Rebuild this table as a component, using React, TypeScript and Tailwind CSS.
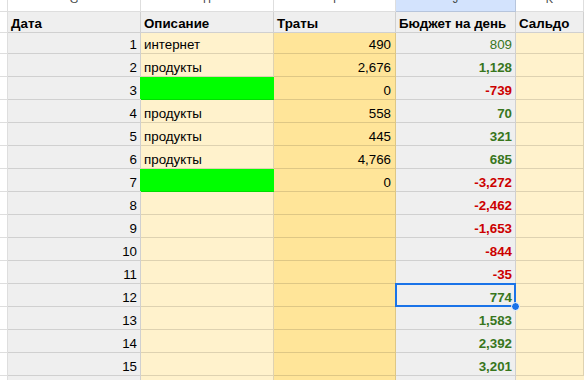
import React from "react";

type Row = {
  n: number;
  d?: string;
  green?: boolean;
  t?: string;
  b?: string;
  red?: boolean;
  light?: boolean;
  sel?: boolean;
};

const rows: Row[] = [
  { n: 1, d: "интернет", t: "490", b: "809", light: true },
  { n: 2, d: "продукты", t: "2,676", b: "1,128" },
  { n: 3, green: true, t: "0", b: "-739", red: true },
  { n: 4, d: "продукты", t: "558", b: "70" },
  { n: 5, d: "продукты", t: "445", b: "321" },
  { n: 6, d: "продукты", t: "4,766", b: "685" },
  { n: 7, green: true, t: "0", b: "-3,272", red: true },
  { n: 8, b: "-2,462", red: true },
  { n: 9, b: "-1,653", red: true },
  { n: 10, b: "-844", red: true },
  { n: 11, b: "-35", red: true },
  { n: 12, b: "774", sel: true },
  { n: 13, b: "1,583" },
  { n: 14, b: "2,392" },
  { n: 15, b: "3,201" },
];

const cell = "border-r border-b border-black/[0.13] flex items-end leading-[15px] pb-[1px] overflow-visible relative";

export default function App() {
  return (
    <div
      className="w-[584px] h-[380px] overflow-hidden bg-white text-[13.33px] text-black"
      style={{ fontFamily: '"Liberation Sans", Arial, sans-serif' }}
    >
      <div className="grid grid-cols-[8px_133px_133px_122px_120px_1fr]">
        {/* column letters */}
        <div className="h-[12px] border-r border-b border-black/[0.13] bg-white" />
        {["G", "H", "I", "J", "K"].map((l) => (
          <div
            key={l}
            className={`h-[12px] border-r border-b border-black/[0.13] overflow-hidden text-center text-[11px] text-[#444746] ${
              l === "J" ? "bg-[#d3e3fd]" : "bg-white"
            }`}
          >
            <div className="-mt-[7px] leading-[12px]">{l}</div>
          </div>
        ))}

        {/* header */}
        <div className="h-[21px] border-r border-b border-black/[0.13] bg-white" />
        {["Дата", "Описание", "Траты", "Бюджет на день", "Сальдо"].map((h) => (
          <div key={h} className={`${cell} h-[21px] bg-[#efefef] font-bold pl-[3px]`}>
            {h}
          </div>
        ))}

        {rows.map((r) => {
          const h = r.n === 1 ? "h-[21px]" : "h-[23px]";
          return (
            <React.Fragment key={r.n}>
              <div className={`${h} border-r border-b border-black/[0.13] bg-white`} />
              <div className={`${cell} ${h} bg-[#efefef] justify-end pr-[3px]`}>{r.n}</div>
              <div
                className={`${cell} ${h} pl-[3px] ${
                  r.green ? "bg-[#00ff00] border-r-[#00ff00]" : "bg-[#fff2cc]"
                }`}
              >
                {r.green && <div className="absolute -left-px top-0 bottom-0 w-px bg-[#00ff00]" />}
                {r.d}
              </div>
              <div className={`${cell} ${h} bg-[#ffe599] justify-end pr-[4px]`}>{r.t}</div>
              <div
                className={`${cell} ${h} bg-[#efefef] justify-end pr-[3px] ${
                  r.light ? "" : "font-bold"
                } ${r.red ? "text-[#cc0000]" : "text-[#38761d]"}`}
              >
                {r.b}
                {r.sel && (
                  <>
                    <div className="absolute -left-px -top-px -right-px -bottom-px border-2 border-[#1a73e8] z-10" />
                    <div className="absolute -right-[5px] -bottom-[5px] w-[9px] h-[9px] rounded-full bg-[#1a73e8] border border-white z-20" />
                  </>
                )}
              </div>
              <div className={`${cell} ${h} bg-[#fff2cc]`} />
            </React.Fragment>
          );
        })}

        {/* partial last row */}
        <div className="h-[23px] border-r border-black/[0.13] bg-white" />
        <div className="h-[23px] border-r border-black/[0.13] bg-[#efefef]" />
        <div className="h-[23px] border-r border-black/[0.13] bg-[#fff2cc]" />
        <div className="h-[23px] border-r border-black/[0.13] bg-[#ffe599]" />
        <div className="h-[23px] border-r border-black/[0.13] bg-[#efefef]" />
        <div className="h-[23px] bg-[#fff2cc]" />
      </div>
    </div>
  );
}
